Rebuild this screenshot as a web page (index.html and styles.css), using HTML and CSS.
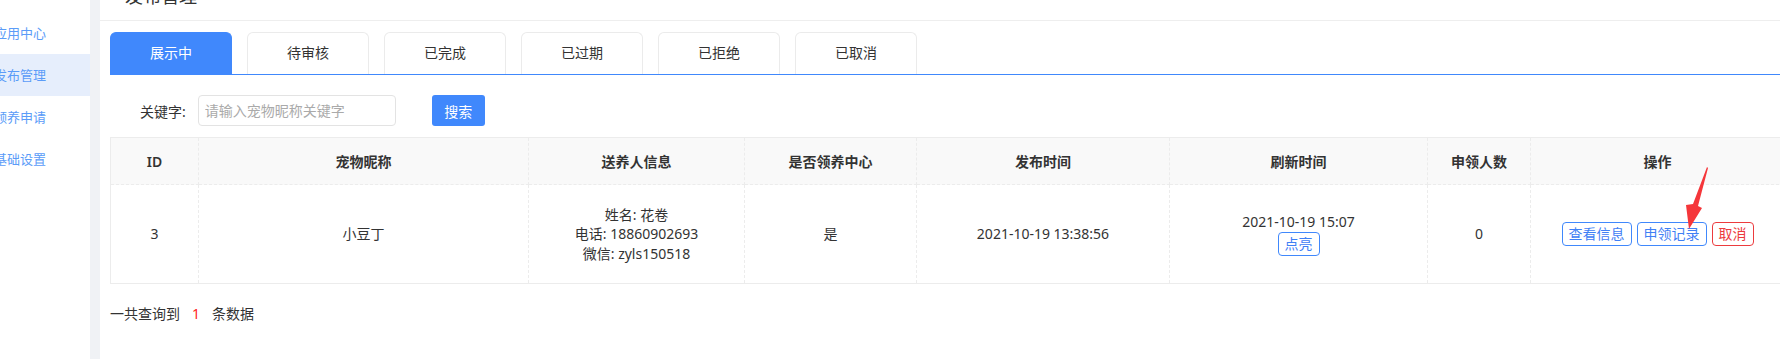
FILE: index.html
```html
<!DOCTYPE html>
<html lang="zh-CN">
<head>
    <meta charset="UTF-8">
    <title>发布管理</title>
    <link rel="stylesheet" href="styles.css">
</head>
<body>
    <div class="layout">
        <div class="sidebar">
            <ul class="nav">
                <li>应用中心</li>
                <li class="active">发布管理</li>
                <li>领养申请</li>
                <li>基础设置</li>
            </ul>
        </div>

        <div class="main">
            <div class="page-header">
                <h2>发布管理</h2>
            </div>

            <div class="content">
                <div class="tabs">
                    <div class="tab active">展示中</div>
                    <div class="tab">待审核</div>
                    <div class="tab">已完成</div>
                    <div class="tab">已过期</div>
                    <div class="tab">已拒绝</div>
                    <div class="tab">已取消</div>
                </div>

                <div class="search-bar">
                    <label for="keyword">关键字:</label>
                    <input type="text" id="keyword" placeholder="请输入宠物昵称关键字">
                    <button class="btn-search">搜索</button>
                </div>

                <table class="list">
                    <colgroup>
                        <col style="width: 88px">
                        <col style="width: 330px">
                        <col style="width: 216px">
                        <col style="width: 172px">
                        <col style="width: 253px">
                        <col style="width: 258px">
                        <col style="width: 103px">
                        <col style="width: 254px">
                    </colgroup>
                    <thead>
                        <tr>
                            <th>ID</th>
                            <th>宠物昵称</th>
                            <th>送养人信息</th>
                            <th>是否领养中心</th>
                            <th>发布时间</th>
                            <th>刷新时间</th>
                            <th>申领人数</th>
                            <th>操作</th>
                        </tr>
                    </thead>
                    <tbody>
                        <tr>
                            <td>3</td>
                            <td>小豆丁</td>
                            <td class="owner">
                                姓名: 花卷<br>
                                电话: 18860902693<br>
                                微信: zyls150518
                            </td>
                            <td>是</td>
                            <td>2021-10-19 13:38:56</td>
                            <td>
                                <div class="refresh">
                                    <span>2021-10-19 15:07</span>
                                    <span class="btn-line">点亮</span>
                                </div>
                            </td>
                            <td>0</td>
                            <td>
                                <div class="ops">
                                    <span class="btn-line">查看信息</span>
                                    <span class="btn-line">申领记录</span>
                                    <span class="btn-line danger">取消</span>
                                </div>
                            </td>
                        </tr>
                    </tbody>
                </table>

                <p class="total">一共查询到<span class="count">1</span>条数据</p>
            </div>

            <svg class="pointer" width="30" height="70" viewBox="0 0 30 70">
                <polygon points="28,6 18,44 22,46 9,67 6,43 13,42 27,5" fill="#f5363a"/>
            </svg>
        </div>
    </div>
</body>
</html>
```

FILE: styles.css
```css
html, body {
    margin: 0;
    overflow: hidden;
}
body {
    font-family: "Noto Sans", "Noto Sans CJK SC", sans-serif;
    font-size: 14px;
    color: #333;
    background: #fff;
}
.layout {
    display: flex;
    height: 359px;
}
.sidebar {
    width: 90px;
    flex-shrink: 0;
    overflow: hidden;
    border-right: 10px solid #f0f2f5;
}
.nav {
    list-style: none;
    margin: 12px 0 0;
    padding: 0;
}
.nav li {
    height: 42px;
    line-height: 42px;
    font-size: 13px;
    color: #5b9cf8;
    text-indent: -6px;
    white-space: nowrap;
}
.nav li.active {
    background: #e6eefc;
}
.main {
    flex: 1;
    position: relative;
    overflow: hidden;
}
.page-header {
    height: 20px;
    border-bottom: 1px solid #eee;
    overflow: hidden;
}
.page-header h2 {
    margin: -13px 0 0 25px;
    font-size: 18px;
    line-height: 18px;
    font-weight: normal;
    color: #333;
}
.content {
    padding: 11px 0 0 10px;
    width: 1674px;
}
.tabs {
    display: flex;
    gap: 15px;
    border-bottom: 1px solid #4088fc;
    width: 1700px;
}
.tab {
    width: 122px;
    height: 42px;
    box-sizing: border-box;
    line-height: 40px;
    text-align: center;
    border: 1px solid #ebebeb;
    border-bottom: none;
    border-radius: 6px 6px 0 0;
    color: #333;
}
.tab.active {
    background: #4088fc;
    border-color: #4088fc;
    color: #fff;
}
.search-bar {
    display: flex;
    align-items: center;
    margin-top: 20px;
    padding-left: 30px;
    height: 31px;
}
.search-bar label {
    margin-right: 12px;
}
.search-bar input {
    width: 198px;
    height: 31px;
    box-sizing: border-box;
    border: 1px solid #e3e3e3;
    border-radius: 4px;
    padding: 0 6px;
    font-family: inherit;
    font-size: 14px;
    color: #333;
    outline: none;
}
.search-bar input::placeholder {
    color: #aaa;
}
.btn-search {
    margin-left: 36px;
    width: 53px;
    height: 31px;
    border: none;
    border-radius: 3px;
    background: #4088fc;
    color: #fff;
    font-family: inherit;
    font-size: 14px;
    cursor: pointer;
}
.list {
    margin-top: 11px;
    width: 1674px;
    table-layout: fixed;
    border-collapse: collapse;
    border: 1px solid #ececec;
}
.list th, .list td {
    border: 1px dashed #ececec;
    text-align: center;
    padding: 0;
}
.list th {
    height: 46px;
    background: #f9f9f9;
    font-weight: 600;
    color: #333;
}
.list td {
    height: 98px;
    line-height: 19.5px;
    color: #333;
}
.refresh {
    display: flex;
    flex-direction: column;
    align-items: center;
    line-height: 20px;
}
.btn-line {
    display: inline-block;
    height: 24px;
    line-height: 22px;
    box-sizing: border-box;
    padding: 0 6px;
    border: 1px solid #4088fc;
    border-radius: 4px;
    color: #3f80f5;
    font-size: 14px;
    cursor: pointer;
}
.btn-line.danger {
    border-color: #ec3b3e;
    color: #ec3b3e;
}
.ops {
    display: flex;
    justify-content: center;
    gap: 5px;
}
.total {
    margin: 20px 0 0;
    line-height: 20px;
    color: #333;
}
.count {
    color: #f22;
    margin: 0 12px;
}
.pointer {
    position: absolute;
    left: 1580px;
    top: 162px;
}
```
